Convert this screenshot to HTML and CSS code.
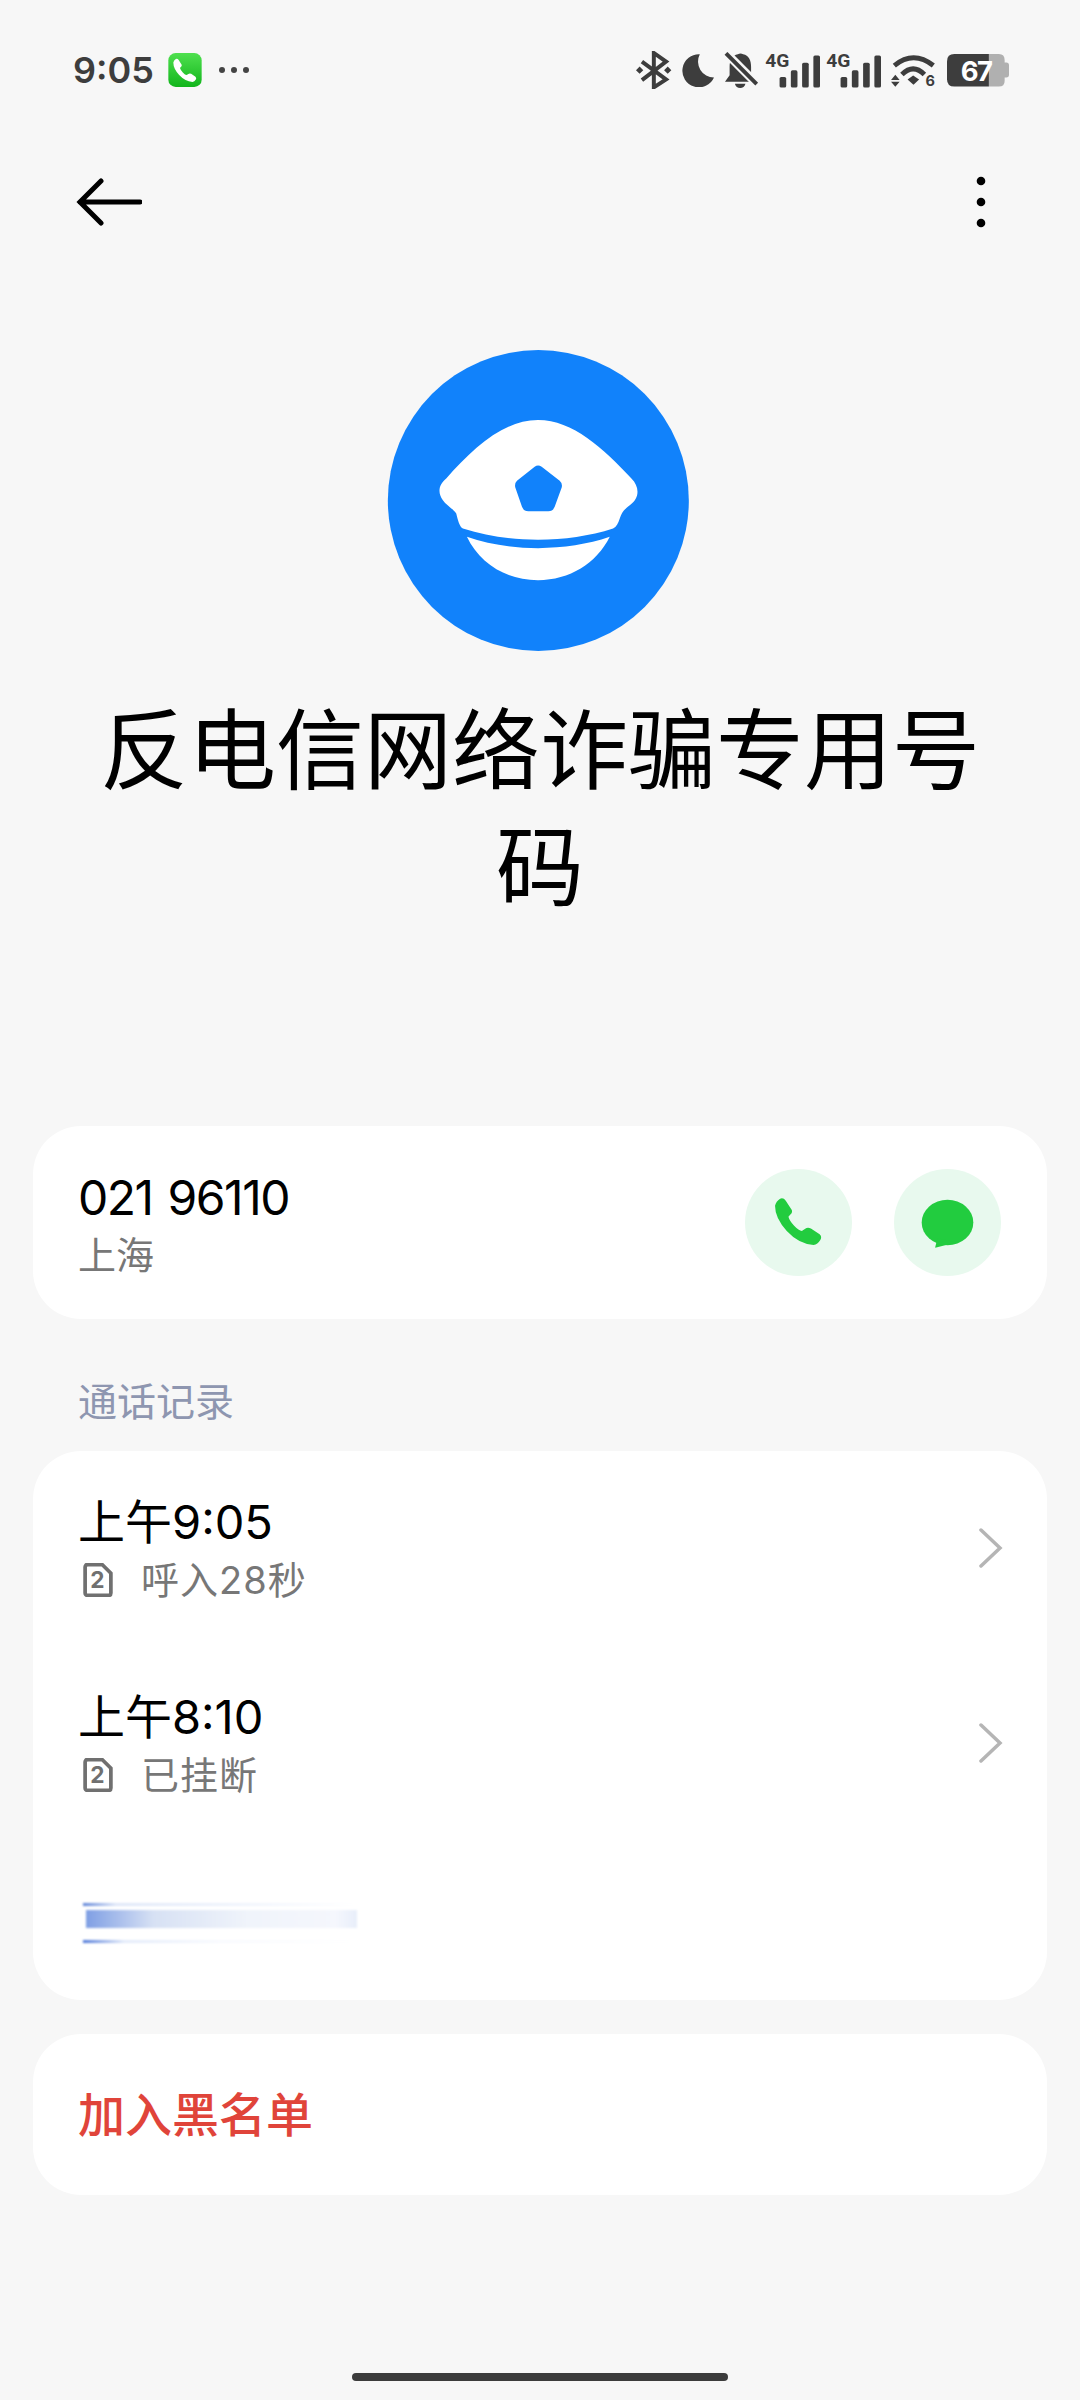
FILE: index.html
```html
<!DOCTYPE html>
<html lang="zh-CN">
<head>
    <meta charset="UTF-8">
    <meta name="viewport" content="width=device-width, initial-scale=1.0">
    <link rel="stylesheet" href="styles.css">
</head>
<body>
<div class="page">
    <div class="status">
        <div class="status-left">
            <span class="clock">9:05</span>
            <svg class="app-phone" viewBox="490 158 100 102">
                <defs>
                    <linearGradient id="appGreen" x1="0" y1="0" x2="0" y2="1">
                        <stop offset="0" stop-color="#4fe04f"/>
                        <stop offset="1" stop-color="#12b51c"/>
                    </linearGradient>
                </defs>
                <rect x="490" y="158" width="100" height="102" rx="22" fill="url(#appGreen)"/>
                <path transform="translate(422.5 89) scale(.5)" fill="#fff" d="M180 174Q190 170 197 180L215 208Q218 216 210 222L205 228Q208 240 222 255Q236 270 245 270L255 264Q262 258 272 263L298 280Q306 288 300 297Q292 310 280 312Q235 308 200 270Q165 232 165 195Q168 182 180 174Z"/>
            </svg>
            <svg class="more-dots" viewBox="0 0 30 8">
                <circle cx="3" cy="4" r="3"/><circle cx="15" cy="4" r="3"/><circle cx="27" cy="4" r="3"/>
            </svg>
        </div>
        <div class="status-right">
            <svg class="si si-bt" viewBox="112 90 110 115">
                <path class="line" d="M132 122L205 176L168 200V96L205 122L132 178"/>
                <path d="M125 137L136 148L125 159L114 148ZM210 137L221 148L210 159L199 148Z"/>
            </svg>
            <svg class="si si-moon" viewBox="245 97 100 100">
                <path d="M302 98A50 50 0 1 0 345 168A48 48 0 0 1 302 98Z"/>
            </svg>
            <svg class="si si-bell" viewBox="376 90 104 112">
                <path d="M417 97Q425 92 433 97C450 100 457 115 457 135V160L466 180H378L392 160V135C392 115 400 100 417 97ZM408 186H440Q436 199 424 199Q412 199 408 186Z"/>
                <path class="cut" d="M372 84L484 196"/>
                <path class="line" d="M381 94L474 187"/>
            </svg>
            <svg class="si si-sig" viewBox="492 72 166 126">
                <text x="493" y="136" class="net">4G</text>
                <rect x="536" y="165" width="20" height="32" rx="5"/>
                <rect x="570" y="145" width="20" height="52" rx="5"/>
                <rect x="604" y="122" width="20" height="75" rx="5"/>
                <rect x="638" y="100" width="20" height="97" rx="5"/>
            </svg>
            <svg class="si si-sig" viewBox="492 72 166 126">
                <text x="493" y="136" class="net">4G</text>
                <rect x="536" y="165" width="20" height="32" rx="5"/>
                <rect x="570" y="145" width="20" height="52" rx="5"/>
                <rect x="604" y="122" width="20" height="75" rx="5"/>
                <rect x="638" y="100" width="20" height="97" rx="5"/>
            </svg>
            <svg class="si si-wifi" viewBox="875 100 133 112">
                <path class="arc" d="M885 135Q943 88 1003 135"/>
                <path class="arc" d="M908 162Q942 128 976 162"/>
                <path d="M925 177L942 165L960 177L943 193Z"/>
                <path d="M888 163L901 179H875ZM875 184H901L888 199Z"/>
                <text x="979" y="197" class="wifi-six">6</text>
            </svg>
            <svg class="si si-batt" viewBox="1043 100 185 98">
                <path class="batt-rest" d="M1168 100H1198Q1215 100 1215 118V125H1220Q1228 125 1228 133V162Q1228 170 1220 170H1215V180Q1215 197 1198 197H1168Z"/>
                <path d="M1168 100V197H1065Q1043 197 1043 175V122Q1043 100 1065 100Z"/>
                <text x="1084" y="179" class="batt-num">67</text>
            </svg>
        </div>
    </div>

    <div class="topbar">
        <svg class="back" viewBox="0 0 66 48">
            <path d="M25 3L4 24L25 45M4 24H64"/>
        </svg>
        <svg class="menu" viewBox="0 0 10 52">
            <circle cx="5" cy="5" r="4.3"/><circle cx="5" cy="26" r="4.3"/><circle cx="5" cy="47" r="4.3"/>
        </svg>
    </div>

    <div class="avatar">
        <svg viewBox="85 57 903 908">
            <circle cx="536" cy="511" r="451" fill="#1182fb"/>
            <path fill="#fff" d="M535 270C640 270 730 355 815 445C840 470 840 505 810 525C790 540 785 550 780 565C775 580 770 590 760 595C620 640 450 640 310 595C300 590 295 570 290 550C280 535 260 525 250 510C235 490 235 465 260 445C340 355 430 270 535 270Z"/>
            <path fill="#1182fb" d="M525 410Q535 402 546 410L600 452Q609 460 606 472L585 530Q580 543 566 543H506Q492 543 487 530L467 472Q464 460 472 452Z"/>
            <path fill="#fff" d="M322 620C450 665 620 665 750 620C710 700 630 750 535 750C440 750 360 700 322 620Z"/>
        </svg>
    </div>

    <h1 class="title">反电信网络诈骗专用号码</h1>

    <div class="card contact">
        <div class="contact-info">
            <div class="number">021 96110</div>
            <div class="place">上海</div>
        </div>
        <div class="actions">
            <div class="round-btn">
                <svg viewBox="150 160 170 170">
                    <path d="M180 174Q190 170 197 180L215 208Q218 216 210 222L205 228Q208 240 222 255Q236 270 245 270L255 264Q262 258 272 263L298 280Q306 288 300 297Q292 310 280 312Q235 308 200 270Q165 232 165 195Q168 182 180 174Z"/>
                </svg>
            </div>
            <div class="round-btn">
                <svg viewBox="597 160 170 170">
                    <ellipse cx="682" cy="245" rx="77" ry="68"/>
                    <path d="M652 292L645 320Q675 314 706 304Z"/>
                </svg>
            </div>
        </div>
    </div>

    <div class="section-label">通话记录</div>

    <div class="card calls">
        <div class="call-row">
            <div>
                <div class="call-time">上午9:05</div>
                <div class="call-sub">
                    <svg class="sim" viewBox="0 0 28 33">
                        <path d="M4 1.500H18L26.500 10V29Q26.500 31.500 24 31.500H4Q1.500 31.500 1.500 29V4Q1.500 1.500 4 1.500Z"/>
                        <text x="14" y="24" text-anchor="middle">2</text>
                    </svg>
                    <span>呼入28秒</span>
                </div>
            </div>
            <svg class="chevron" viewBox="0 0 24 40"><path d="M2 2L21 20L2 38"/></svg>
        </div>
        <div class="call-row">
            <div>
                <div class="call-time">上午8:10</div>
                <div class="call-sub">
                    <svg class="sim" viewBox="0 0 28 33">
                        <path d="M4 1.500H18L26.500 10V29Q26.500 31.500 24 31.500H4Q1.500 31.500 1.500 29V4Q1.500 1.500 4 1.500Z"/>
                        <text x="14" y="24" text-anchor="middle">2</text>
                    </svg>
                    <span>已挂断</span>
                </div>
            </div>
            <svg class="chevron" viewBox="0 0 24 40"><path d="M2 2L21 20L2 38"/></svg>
        </div>
        <div class="smear">
            <div class="smear-thin"></div>
            <div class="smear-main"></div>
            <div class="smear-thin"></div>
        </div>
    </div>

    <div class="card block">加入黑名单</div>

    <div class="home-bar"></div>
</div>
</body>
</html>
```

FILE: styles.css
```css
* {
    box-sizing: border-box;
}

body {
    margin: 0;
    background: #f7f7f7;
    font-family: Inter, "Noto Sans CJK SC", sans-serif;
    color: #000;
}

.page {
    width: 1080px;
    height: 2400px;
    overflow: hidden;
    padding: 0 33px;
}

/* status bar */
.status {
    height: 140px;
    display: flex;
    align-items: center;
    justify-content: space-between;
    padding: 0 38px 0 40px;
}

.status-left {
    display: flex;
    align-items: center;
}

.clock {
    font-size: 36px;
    font-weight: 600;
    color: #3d3d3d;
    width: 95px;
}

.app-phone {
    width: 34px;
    height: 34px;
}

.more-dots {
    width: 30px;
    height: 8px;
    margin-left: 17px;
    fill: #444;
}

.status-right {
    display: flex;
    align-items: center;
}

.si {
    fill: #3d3d3d;
    display: block;
}

.si .line {
    fill: none;
    stroke: #3d3d3d;
    stroke-width: 12;
}

.si .cut {
    fill: none;
    stroke: #f7f7f7;
    stroke-width: 26;
}

.si .arc {
    fill: none;
    stroke: #3d3d3d;
    stroke-width: 15;
}

.si .net {
    font-size: 58px;
    font-weight: 700;
    font-family: Roboto, sans-serif;
}

.si .wifi-six {
    font-size: 44px;
    font-weight: 700;
}

.si .batt-rest {
    fill: #b0b0b0;
}

.si .batt-num {
    font-size: 82px;
    font-weight: 700;
    letter-spacing: -5px;
    fill: #fff;
}

.si-bt {
    width: 37px;
    height: 38px;
}

.si-moon {
    width: 33px;
    height: 33px;
    margin-left: 9px;
}

.si-bell {
    width: 35px;
    height: 37px;
    margin-left: 10px;
}

.si-sig {
    width: 55px;
    height: 42px;
    margin: 0 0 6px 6px;
}

.si-wifi {
    width: 44px;
    height: 37px;
    margin: 4px 0 0 10px;
}

.si-batt {
    width: 62px;
    height: 33px;
    margin-left: 12px;
}

/* top bar */
.topbar {
    height: 124px;
    display: flex;
    align-items: center;
    justify-content: space-between;
    padding: 0 61px 0 43px;
}

.back {
    width: 66px;
    height: 48px;
}

.back path {
    fill: none;
    stroke: #000;
    stroke-width: 5;
    stroke-linecap: round;
}

.menu {
    width: 10px;
    height: 52px;
}

/* header */
.avatar {
    margin-top: 85px;
    display: flex;
    justify-content: center;
}

.avatar svg {
    width: 303px;
    height: 303px;
    margin-right: 3px;
}

.title {
    margin: 40px 50px 0;
    font-size: 88px;
    font-weight: 400;
    line-height: 117px;
    text-align: center;
}

/* cards */
.card {
    background: #fff;
    border-radius: 48px;
}

.contact {
    margin-top: 200px;
    height: 193px;
    display: flex;
    align-items: center;
    justify-content: space-between;
    padding: 0 46px 0 45px;
}

.contact-info {
    padding-top: 3px;
}

.number {
    font-size: 48px;
    line-height: 56px;
    letter-spacing: -1.500px;
    word-spacing: 3px;
}

.place {
    font-size: 38px;
    line-height: 48px;
    margin-top: 5px;
    color: #777;
}

.actions {
    display: flex;
    gap: 42px;
}

.round-btn {
    width: 107px;
    height: 107px;
    border-radius: 50%;
    background: #e8f9ee;
    display: flex;
    align-items: center;
    justify-content: center;
}

.round-btn svg {
    width: 57px;
    height: 57px;
    fill: #22cc3f;
}

.section-label {
    margin-top: 58px;
    margin-bottom: 24px;
    padding-left: 45px;
    font-size: 39px;
    line-height: 50px;
    color: #8e96b0;
}

.calls {
    height: 549px;
    padding: 0 44px 0 45px;
}

.call-row {
    height: 195px;
    display: flex;
    align-items: center;
    justify-content: space-between;
}

.call-time {
    font-size: 47px;
    line-height: 56px;
}

.call-sub {
    display: flex;
    align-items: center;
    margin-top: 6px;
    font-size: 38px;
    line-height: 48px;
    letter-spacing: 1px;
    color: #777;
}

.sim {
    width: 30px;
    height: 34px;
    margin: 0 28px 0 5px;
}

.sim path {
    fill: none;
    stroke: #707070;
    stroke-width: 3.600;
}

.sim text {
    font-size: 22px;
    font-weight: 700;
    fill: #707070;
}

.chevron {
    width: 24px;
    height: 40px;
    margin-bottom: 2px;
}

.chevron path {
    fill: none;
    stroke: #b5b5b5;
    stroke-width: 3.500;
    stroke-linecap: round;
}

/* the blurred-out strip left in the screenshot */
.smear {
    margin: 62px 0 0 5px;
    width: 274px;
    display: flex;
    flex-direction: column;
    gap: 4px;
    filter: blur(1px);
}

.smear-thin {
    height: 3px;
    background: linear-gradient(90deg, #5f84d8, #dfe7f8 12%, #f4f7fd 70%, #fff);
}

.smear-main {
    height: 18px;
    margin: 0 0 8px 3px;
    background: linear-gradient(90deg, #7f9fe4, #d7e1f4 25%, #f0f4fb 60%, #f5f7fd 92%, #e8eefa);
}

.smear-main + .smear-thin {
    background: linear-gradient(90deg, #4f78d8, #e3ebfa 15%, #f8fafe 50%, #fff);
}

.block {
    margin-top: 34px;
    height: 161px;
    display: flex;
    align-items: center;
    padding: 0 0 6px 45px;
    font-size: 47px;
    font-weight: 500;
    color: #e0443a;
}

.home-bar {
    width: 376px;
    height: 8px;
    margin: 178px auto 0;
    border-radius: 4px;
    background: #3c3c3c;
}
```
